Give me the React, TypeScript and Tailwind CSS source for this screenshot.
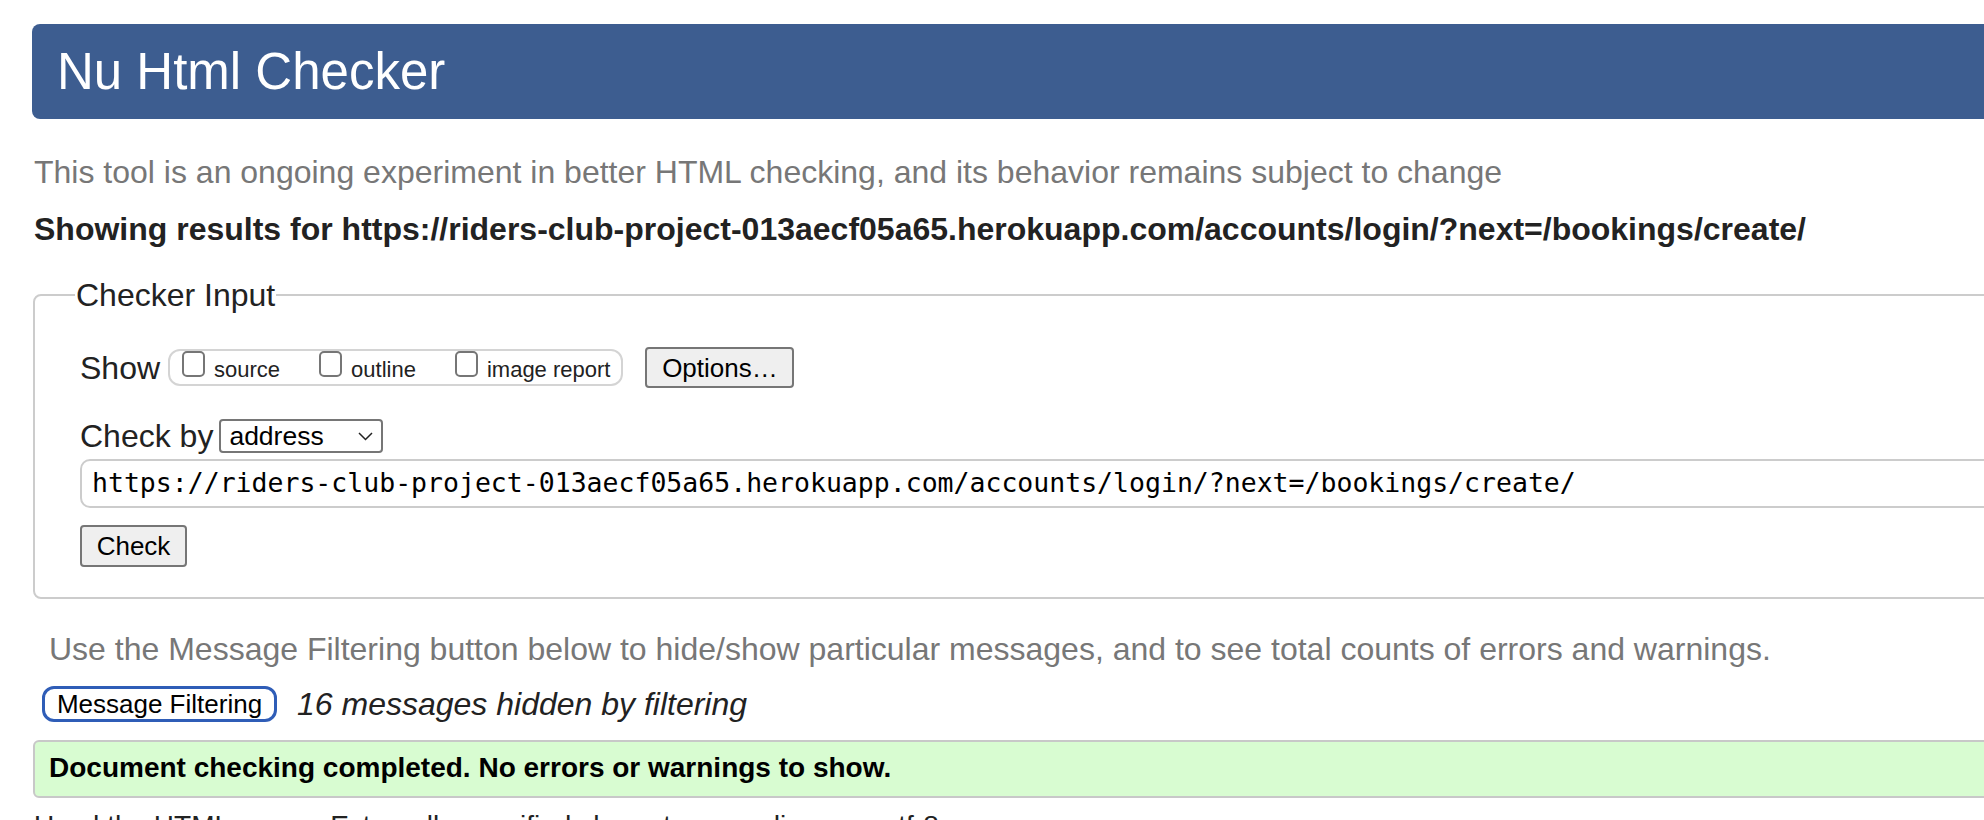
import React from 'react';

const checkedUrl =
  'https://riders-club-project-013aecf05a65.herokuapp.com/accounts/login/?next=/bookings/create/';

function ShowOption({ label }: { label: string }) {
  return (
    <label className="flex items-start gap-[9px]">
      <span className="w-[23px] h-[26px] border-2 border-[#767676] rounded-[5px] bg-white" />
      <span className="mt-[8px] text-[22px] leading-none text-[#222]">{label}</span>
    </label>
  );
}

export default function App() {
  return (
    <div className="w-[1984px] h-[820px] overflow-hidden bg-white font-['Liberation_Sans',Arial,sans-serif] text-[#222]">
      <div className="w-[2100px] pl-[32px] pt-[24px]">
        <header className="h-[95px] bg-[#3d5d90] rounded-[8px] flex items-center pl-[25px]">
          <h1 className="text-[51px] leading-none text-white">Nu Html Checker</h1>
        </header>

        <p className="mt-[37px] ml-[2px] text-[32px] leading-none text-[#777]">
          This tool is an ongoing experiment in better HTML checking, and its behavior remains subject to change
        </p>
        <p className="mt-[25px] ml-[2px] text-[32px] leading-none font-bold">
          Showing results for {checkedUrl}
        </p>

        <fieldset className="mt-[34px] ml-[1px] border-2 border-[#ccc] rounded-[8px] pl-[45px] pt-[36px] pb-[30px]">
          <legend className="ml-[-5px] px-[1px] text-[32px] leading-none">Checker Input</legend>

          <div className="flex items-center h-[41px]">
            <span className="text-[32px] leading-none">Show</span>
            <div className="ml-[8px] h-[37px] flex items-start gap-[39px] border-2 border-[#d4d4d4] rounded-[12px] pl-[12px] pr-[11px]">
              <ShowOption label="source" />
              <ShowOption label="outline" />
              <ShowOption label="image report" />
            </div>
            <button className="ml-[22px] w-[149px] h-[41px] bg-[#efefef] border-2 border-[#767676] rounded-[4px] text-[26px] leading-none text-black">
              Options…
            </button>
          </div>

          <div className="mt-[31px] flex items-center h-[34px]">
            <span className="text-[32px] leading-none">Check by</span>
            <div className="ml-[6px] w-[164px] h-[34px] border-2 border-[#767676] rounded-[4px] bg-white flex items-center justify-between pl-[8px] pr-[8px]">
              <span className="text-[26.5px] leading-none text-black">address</span>
              <svg width="15" height="9" viewBox="0 0 15 9" fill="none">
                <polyline points="1,1 7.5,7.5 14,1" stroke="#222" strokeWidth="1.5" />
              </svg>
            </div>
          </div>

          <div className="mt-[6px] h-[49px] border-2 border-[#ccc] rounded-[10px] bg-white flex items-center pl-[10px]">
            <span className="font-['DejaVu_Sans_Mono',monospace] text-[26.5px] leading-none text-black">
              {checkedUrl}
            </span>
          </div>

          <button className="mt-[17px] w-[107px] h-[42px] bg-[#efefef] border-2 border-[#767676] rounded-[4px] text-[26px] leading-none text-black">
            Check
          </button>
        </fieldset>

        <p className="mt-[34px] ml-[17px] text-[32px] leading-none text-[#777]">
          Use the Message Filtering button below to hide/show particular messages, and to see total counts of errors and warnings.
        </p>

        <div className="mt-[21px] ml-[10px] flex items-center">
          <button className="w-[235px] h-[36px] bg-white border-[3px] border-[#2f5db7] rounded-[12px] text-[26px] leading-none text-black">
            Message Filtering
          </button>
          <span className="ml-[20px] text-[32px] leading-none italic">16 messages hidden by filtering</span>
        </div>

        <div className="mt-[18px] ml-[1px] h-[58px] border-2 border-[#c8c8c8] rounded-[6px] bg-[#d8fcd1] flex items-center pl-[14px] pb-[2px]">
          <span className="text-[28px] leading-none font-bold text-black">
            Document checking completed. No errors or warnings to show.
          </span>
        </div>

        <p className="mt-[14px] ml-[2px] text-[28px] leading-none">
          Used the HTML parser. Externally specified character encoding was utf-8.
        </p>
      </div>
    </div>
  );
}
